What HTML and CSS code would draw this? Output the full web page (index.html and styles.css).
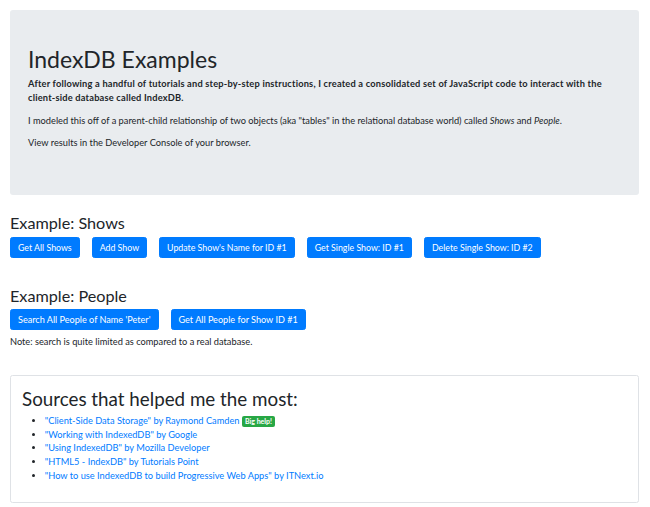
FILE: index.html
```html
<!DOCTYPE html>
<html lang="en">
<head>
<meta charset="utf-8">
<title>IndexDB Examples</title>
<link rel="stylesheet" href="styles.css">
</head>
<body>
<div class="container">
  <div class="jumbotron">
    <h1 class="title">IndexDB Examples</h1>
    <p><strong>After following a handful of tutorials and step-by-step instructions, I created a consolidated set of JavaScript code to interact with the client-side database called IndexDB.</strong></p>
    <p>I modeled this off of a parent-child relationship of two objects (aka "tables" in the relational database world) called <em>Shows</em> and <em>People</em>.</p>
    <p>View results in the Developer Console of your browser.</p>
  </div>

  <section class="example">
    <h3 class="example-title">Example: Shows</h3>
    <div class="btn-row">
      <button class="btn">Get All Shows</button>
      <button class="btn">Add Show</button>
      <button class="btn">Update Show's Name for ID #1</button>
      <button class="btn">Get Single Show: ID #1</button>
      <button class="btn">Delete Single Show: ID #2</button>
    </div>
  </section>

  <section class="example example-last">
    <h3 class="example-title">Example: People</h3>
    <div class="btn-row">
      <button class="btn">Search All People of Name 'Peter'</button>
      <button class="btn">Get All People for Show ID #1</button>
    </div>
    <p class="note">Note: search is quite limited as compared to a real database.</p>
  </section>

  <div class="card">
    <h2 class="card-title">Sources that helped me the most:</h2>
    <ul class="sources">
      <li><a href="#">"Client-Side Data Storage" by Raymond Camden</a> <span class="badge">Big help!</span></li>
      <li><a href="#">"Working with IndexedDB" by Google</a></li>
      <li><a href="#">"Using IndexedDB" by Mozilla Developer</a></li>
      <li><a href="#">"HTML5 - IndexDB" by Tutorials Point</a></li>
      <li><a href="#">"How to use IndexedDB to build Progressive Web Apps" by ITNext.io</a></li>
    </ul>
  </div>
</div>
</body>
</html>
```

FILE: styles.css
```css
body {
  margin: 0;
  font-family: Lato, "Noto Sans", sans-serif;
  font-size: 9.25px;
  line-height: 13.7px;
  color: #212529;
  background: #fff;
}
.container {
  padding: 10px 11px 0 10px;
}
.jumbotron {
  background: #e9ecef;
  border-radius: 3px;
  padding: 35px 18px 36px;
  margin-bottom: 18px;
}
.title {
  font-size: 23px;
  font-weight: 400;
  line-height: 28px;
  margin: 0 0 4px;
}
p {
  margin: 0 0 9.1px;
}
strong {
  letter-spacing: 0.2px;
}
.example {
  margin-bottom: 28px;
}
.example-last {
  margin-bottom: 26px;
}
.example-title {
  font-size: 16.2px;
  font-weight: 400;
  line-height: 20px;
  margin: 0 0 4px;
}
.btn-row {
  display: flex;
  gap: 12px;
}
.btn {
  font: inherit;
  font-size: 8.8px;
  line-height: 13px;
  height: 21px;
  color: #fff;
  background: #007bff;
  border: 1px solid #007bff;
  border-radius: 2.5px;
  padding: 3px 7px;
  cursor: pointer;
}
.example-last .btn-row {
  margin-top: -1px;
}
.example-last .btn {
  font-size: 9.1px;
}
.note {
  margin: 5px 0 0;
}
.card {
  border: 1px solid #dfe2e6;
  border-radius: 2.5px;
  padding: 11px 11px 11px;
}
.card-title {
  font-size: 18.8px;
  font-weight: 400;
  line-height: 23px;
  margin: 0 0 4px;
}
.sources {
  margin: 0 0 9px;
  padding-left: 22.8px;
}
.sources a {
  color: #007bff;
  text-decoration: none;
}
.badge {
  display: inline-block;
  font-size: 7px;
  font-weight: 700;
  line-height: 1;
  letter-spacing: 0;
  color: #fff;
  background: #28a745;
  padding: 2px 3px;
  border-radius: 2px;
  vertical-align: baseline;
}
```
